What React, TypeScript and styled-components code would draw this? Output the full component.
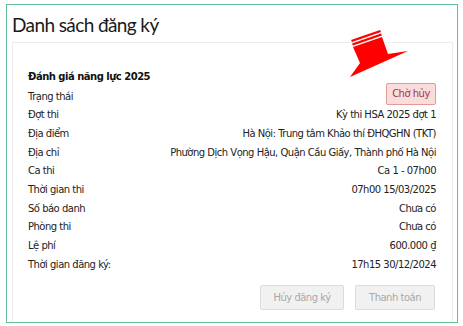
import React from "react";
import styled, { createGlobalStyle } from "styled-components";

const Global = createGlobalStyle`
  html, body { margin: 0; padding: 0; background: #ffffff; }
  body { font-family: "DejaVu Sans", sans-serif; }
`;

const Frame = styled.div`
  position: relative;
  box-sizing: border-box;
  margin: 4px 0 0 6px;
  width: 452px;
  height: 319px;
  border: 1px solid #62bf98;
  padding: 0 4px 0 5px;
  display: flex;
  flex-direction: column;
  overflow: hidden;
`;

const Title = styled.h1`
  margin: 0;
  padding: 9px 0 6px 0;
  font-family: "Lato", "Noto Sans", sans-serif;
  font-weight: 400;
  font-size: 19px;
  letter-spacing: -0.6px;
  line-height: 22px;
  color: #1a1a1a;
`;

const Card = styled.div`
  flex: 1;
  border: 1px solid #ececec;
  border-bottom: none;
  padding: 25px 16px 0 15px;
  display: flex;
  flex-direction: column;
`;

const Heading = styled.div`
  font-family: "DejaVu Sans", sans-serif;
  font-weight: 700;
  font-size: 10px;
  letter-spacing: -0.5px;
  line-height: 18.7px;
  color: #111;
`;

const Row = styled.div`
  display: flex;
  justify-content: space-between;
  align-items: center;
  height: 18.7px;
  font-family: "DejaVu Sans", sans-serif;
  font-size: 10px;
  letter-spacing: -0.5px;
  color: #222;
`;

const Label = styled.span``;
const Value = styled.span`
  text-align: right;
`;

const Badge = styled.span`
  box-sizing: border-box;
  display: inline-flex;
  align-items: center;
  justify-content: center;
  width: 50px;
  height: 22px;
  margin-top: -5px;
  border: 1px solid #e29a9a;
  border-radius: 2px;
  background: #f9dcdc;
  color: #a33a3a;
  font-size: 10px;
`;

const Actions = styled.div`
  display: flex;
  justify-content: flex-end;
  gap: 11px;
  margin-top: 11px;
  padding-right: 1px;
`;

const Button = styled.button<{ $w: number }>`
  box-sizing: border-box;
  width: ${(p) => p.$w}px;
  height: 25px;
  padding: 0;
  border: 1px solid #dcdcdc;
  border-radius: 2px;
  background: #f1f1f1;
  color: #a9a9a9;
  font-family: "DejaVu Sans", sans-serif;
  font-size: 10px;
  letter-spacing: -0.5px;
  cursor: default;
`;

const Arrow = styled.svg`
  position: absolute;
  left: 334px;
  top: 21px;
`;

const rows: [string, string][] = [
  ["Đợt thi", "Kỳ thi HSA 2025 đợt 1"],
  ["Địa điểm", "Hà Nội: Trung tâm Khảo thí ĐHQGHN (TKT)"],
  ["Địa chỉ", "Phường Dịch Vọng Hậu, Quận Cầu Giấy, Thành phố Hà Nội"],
  ["Ca thi", "Ca 1 - 07h00"],
  ["Thời gian thi", "07h00 15/03/2025"],
  ["Số báo danh", "Chưa có"],
  ["Phòng thi", "Chưa có"],
  ["Lệ phí", "600.000 ₫"],
  ["Thời gian đăng ký:", "17h15 30/12/2024"],
];

// arrow drawn in page coords offset by (341, 26)
const ox = 341;
const oy = 26;
const pt = (pts: number[][]) => pts.map(([x, y]) => `${x - ox},${y - oy}`).join(" ");

export default function App() {
  return (
    <>
      <Global />
      <Frame>
        <Title>Danh sách đăng ký</Title>
        <Card>
          <Heading>Đánh giá năng lực 2025</Heading>
          <Row>
            <Label>Trạng thái</Label>
            <Badge>Chờ hủy</Badge>
          </Row>
          {rows.map(([l, v]) => (
            <Row key={l}>
              <Label>{l}</Label>
              <Value>{v}</Value>
            </Row>
          ))}
          <Actions>
            <Button $w={84}>Hủy đăng ký</Button>
            <Button $w={80}>Thanh toán</Button>
          </Actions>
        </Card>
        <Arrow width="80" height="62" viewBox="0 0 80 62">
          <g fill="#ff0000">
            <polygon points={pt([[351, 40], [380, 30], [381, 32], [352, 42]])} />
            <polygon points={pt([[352, 43.5], [381, 33.5], [382, 35.5], [353, 45.5]])} />
            <polygon points={pt([[353, 47], [382, 37], [388, 54], [408, 51], [350, 77], [360, 63]])} />
          </g>
        </Arrow>
      </Frame>
    </>
  );
}
